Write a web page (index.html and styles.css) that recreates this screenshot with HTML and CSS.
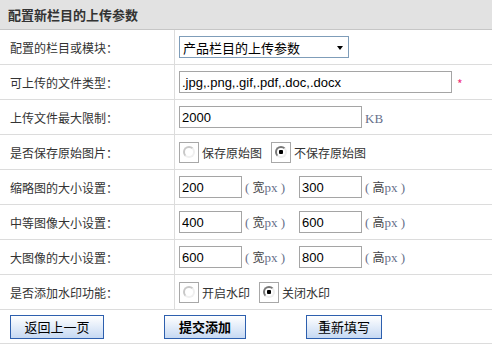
FILE: index.html
```html
<!DOCTYPE html>
<html lang="zh-CN">
<head>
    <meta charset="UTF-8">
    <title>配置新栏目的上传参数</title>
    <link rel="stylesheet" href="styles.css">
</head>
<body>

    <div class="panel">
        <div class="panel-title">配置新栏目的上传参数</div>

        <div class="row">
            <div class="label">配置的栏目或模块：</div>
            <div class="field">
                <div class="select-box">
                    <select class="select">
                        <option>产品栏目的上传参数</option>
                    </select>
                </div>
            </div>
        </div>

        <div class="row">
            <div class="label">可上传的文件类型：</div>
            <div class="field">
                <input type="text" class="text wide" value=".jpg,.png,.gif,.pdf,.doc,.docx">
                <span class="required">*</span>
            </div>
        </div>

        <div class="row">
            <div class="label">上传文件最大限制：</div>
            <div class="field">
                <input type="text" class="text medium" value="2000">
                <span class="unit kb">KB</span>
            </div>
        </div>

        <div class="row">
            <div class="label">是否保存原始图片：</div>
            <div class="field">
                <label class="radio"><span class="radio-box"><span class="dot"></span></span>保存原始图</label>
                <label class="radio"><span class="radio-box"><span class="dot checked"></span></span>不保存原始图</label>
            </div>
        </div>

        <div class="row">
            <div class="label">缩略图的大小设置：</div>
            <div class="field">
                <input type="text" class="text small" value="200">
                <span class="unit size">( <b>宽</b>px )</span>
                <input type="text" class="text small" value="300">
                <span class="unit size">( <b>高</b>px )</span>
            </div>
        </div>

        <div class="row">
            <div class="label">中等图像大小设置：</div>
            <div class="field">
                <input type="text" class="text small" value="400">
                <span class="unit size">( <b>宽</b>px )</span>
                <input type="text" class="text small" value="600">
                <span class="unit size">( <b>高</b>px )</span>
            </div>
        </div>

        <div class="row">
            <div class="label">大图像的大小设置：</div>
            <div class="field">
                <input type="text" class="text small" value="600">
                <span class="unit size">( <b>宽</b>px )</span>
                <input type="text" class="text small" value="800">
                <span class="unit size">( <b>高</b>px )</span>
            </div>
        </div>

        <div class="row">
            <div class="label">是否添加水印功能：</div>
            <div class="field">
                <label class="radio"><span class="radio-box"><span class="dot"></span></span>开启水印</label>
                <label class="radio"><span class="radio-box"><span class="dot checked"></span></span>关闭水印</label>
            </div>
        </div>

        <div class="actions">
            <button class="btn back">返回上一页</button>
            <button class="btn submit">提交添加</button>
            <button class="btn reset">重新填写</button>
        </div>
    </div>

</body>
</html>
```

FILE: styles.css
```css
body {
    margin: 0;
    background: #fff;
    font-family: "Noto Sans CJK SC", "Liberation Sans", sans-serif;
    font-size: 12px;
    color: #333;
}
.panel {
    width: 492px;
}
.panel-title {
    height: 29px;
    line-height: 29px;
    padding-left: 8px;
    background: #e2e2e2;
    border-bottom: 1px solid #c6c6c6;
    font-size: 13px;
    font-weight: bold;
    color: #333;
}
.row {
    display: grid;
    grid-template-columns: 175px 1fr;
    height: 34px;
    border-bottom: 1px solid #dcdcdc;
}
.label {
    display: flex;
    align-items: center;
    padding-left: 10px;
    border-right: 1px solid #dcdcdc;
}
.field {
    display: flex;
    align-items: center;
    padding-left: 4px;
}
.text {
    box-sizing: border-box;
    height: 22px;
    padding: 0 2px;
    border: 1px solid #a5a5a5;
    font-family: "Liberation Sans", Arial, sans-serif;
    font-size: 13px;
    color: #000;
    outline: none;
}
.text.wide { width: 273px; }
.text.medium { width: 183px; }
.text.small { width: 63px; }
.required {
    margin: 3px 0 0 5px;
    color: #f0307a;
    font-size: 12px;
}
.unit {
    margin: 0 3px;
    font-family: "Liberation Serif", serif;
    font-size: 13px;
    color: #67708a;
    white-space: pre;
}
.unit.size {
    width: 51px;
}
.unit b {
    font-family: "Noto Sans CJK SC", serif;
    font-weight: normal;
    font-size: 12px;
    color: #444;
}
.unit.kb {
    align-self: flex-end;
    margin: 0 0 7px 3px;
}
.select-box {
    position: relative;
    width: 170px;
}
.select {
    box-sizing: border-box;
    width: 170px;
    height: 22px;
    padding: 0 0 0 3px;
    border: 1px solid #7f9db9;
    background: #fff;
    font-family: "Noto Sans CJK SC", sans-serif;
    font-size: 13px;
    color: #000;
    appearance: none;
    -webkit-appearance: none;
    outline: none;
}
.select-box::after {
    content: "";
    position: absolute;
    left: 158px;
    top: 10px;
    border-left: 3.5px solid transparent;
    border-right: 3.5px solid transparent;
    border-top: 4px solid #000;
}
.radio {
    display: flex;
    align-items: center;
    gap: 3px;
    margin-right: 9px;
}
.radio-box {
    box-sizing: border-box;
    width: 20px;
    height: 21px;
    border: 1px solid #a8a8a8;
    display: flex;
    align-items: center;
    justify-content: center;
}
.dot {
    box-sizing: border-box;
    width: 12px;
    height: 12px;
    border-radius: 50%;
    border: 2px solid;
    border-color: #c8c8c8 #f0f0f0 #f0f0f0 #c8c8c8;
}
.dot.checked {
    border-color: #777 #eee #eee #777;
    background: radial-gradient(circle, #000 0, #000 2px, #fff 2.5px);
}
.actions {
    display: flex;
    align-items: center;
    gap: 60px;
    height: 33px;
    padding-left: 10px;
    border-bottom: 1px solid #dcdcdc;
}
.btn {
    box-sizing: border-box;
    height: 24px;
    padding: 0;
    border: 1px solid #2d5fae;
    background: linear-gradient(#ffffff, #c6d9f3);
    font-family: "Noto Sans CJK SC", sans-serif;
    font-size: 13px;
    color: #000;
    cursor: pointer;
}
.btn.back { width: 94px; }
.btn.submit { width: 82px; font-weight: bold; }
.btn.reset { width: 76px; }
```
